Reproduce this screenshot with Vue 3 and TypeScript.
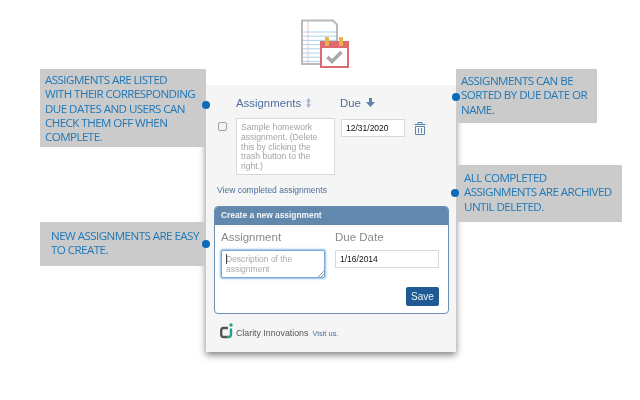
<script setup lang="ts">
const lines: number[] = [0, 1, 2, 3, 4, 5, 6, 7]
</script>

<template>
  <div class="page">
    <div class="col left">
      <div class="note n1">
        <p>ASSIGMENTS ARE LISTED<br />WITH THEIR CORRESPONDING<br />DUE DATES AND USERS CAN<br />CHECK THEM OFF WHEN<br />COMPLETE.</p>
        <i class="dot"></i>
      </div>
      <div class="note n2">
        <p>NEW ASSIGNMENTS ARE EASY<br />TO CREATE.</p>
        <i class="dot"></i>
      </div>
    </div>

    <div class="center">
      <svg class="hero" width="50" height="50" viewBox="0 0 50 50">
        <path d="M2 1.500H33L37 5.500V45H2Z" fill="#fff" stroke="#b9b9b9" stroke-width="2" />
        <line v-for="n in lines" :key="n" x1="3" x2="36" :y1="13 + n * 4.200" :y2="13 + n * 4.200" stroke="#a9d3ea" />
        <line x1="8" x2="8" y1="2" y2="44" stroke="#f0c4c4" />
        <rect x="21" y="23" width="27" height="25" fill="#fff" stroke="#dc6a6e" stroke-width="2" />
        <rect x="21" y="23" width="27" height="6" fill="#dc6a6e" />
        <rect x="25" y="18" width="4" height="9" rx="1" fill="#e9b24a" />
        <rect x="39" y="18" width="4" height="9" rx="1" fill="#e9b24a" />
        <path d="M27.500 38L32 42.500L41.500 33" fill="none" stroke="#a8a8a8" stroke-width="3.500" />
      </svg>

      <main class="panel">
        <div class="heads">
          <span class="h-a">Assignments
            <svg class="sort" width="5" height="10" viewBox="0 0 5 10"><path d="M2.500 0L5 3.500H3.500V6.500H5L2.500 10L0 6.500H1.500V3.500H0Z" fill="#a5bad0" /></svg>
          </span>
          <span class="h-d">Due
            <svg width="9" height="9" viewBox="0 0 9 9"><path d="M3 0H6V4H9L4.500 9L0 4H3Z" fill="#5d84ac" /></svg>
          </span>
        </div>

        <div class="row">
          <span class="check"></span>
          <div class="sample">Sample homework assignment. (Delete this by clicking the trash button to the right.)</div>
          <div class="date d1">12/31/2020</div>
          <svg class="trash" width="12" height="13" viewBox="0 0 12 13">
            <path d="M0.500 2.500H11.500M4 2.500V0.500H8V2.500M1.500 4.500V12.500H10.500V4.500ZM4.500 6V11M7.500 6V11" fill="none" stroke="#5d84ac" />
          </svg>
        </div>

        <a class="view">View completed assignments</a>

        <section class="create">
          <header>Create a new assignment</header>
          <div class="form">
            <div class="fields">
              <div class="field f1">
                <label>Assignment</label>
                <div class="area"><span class="caret"></span>Description of the assignment<svg class="grip" width="7" height="7" viewBox="0 0 7 7"><path d="M1 7L7 1M4 7L7 4" stroke="#999" fill="none" /></svg></div>
              </div>
              <div class="field f2">
                <label>Due Date</label>
                <div class="date d2">1/16/2014</div>
              </div>
            </div>
            <div class="actions"><button type="button">Save</button></div>
          </div>
        </section>

        <footer>
          <svg width="14" height="16" viewBox="0 0 14 16">
            <path d="M8 5H3.500Q1.200 5 1.200 7.500V11.500Q1.200 14 3.500 14H7" fill="none" stroke="#555" stroke-width="2.400" />
            <path d="M11 5.500V11.500Q11 14 8.500 14H7" fill="none" stroke="#2c9c8c" stroke-width="2.400" />
            <circle cx="11" cy="2" r="1.700" fill="#2c9c8c" />
          </svg>
          <span class="brand">Clarity Innovations</span>
          <span class="visit"><a>Visit us</a>.</span>
        </footer>
      </main>
    </div>

    <div class="col right">
      <div class="note n3">
        <i class="dot"></i>
        <p>ASSIGNMENTS CAN BE<br />SORTED BY DUE DATE OR<br />NAME.</p>
      </div>
      <div class="note n4">
        <i class="dot"></i>
        <p>ALL COMPLETED<br />ASSIGNMENTS ARE ARCHIVED<br />UNTIL DELETED.</p>
      </div>
    </div>
  </div>
</template>

<style>
html, body { margin: 0; background: #fff; overflow: hidden; }
</style>

<style scoped>
.page {
  width: 640px;
  height: 400px;
  display: grid;
  grid-template-columns: 206px 250px 184px;
  background: #fff;
  overflow: hidden;
}
.col { display: flex; flex-direction: column; padding-top: 69px; position: relative; z-index: 2; }
.left { padding-left: 40px; gap: 75px; }
.right { gap: 42px; }

.note {
  position: relative;
  background: #cbcbcb;
  color: #1f78b8;
  font: 11.6px/14.300px "Open Sans", sans-serif;
  letter-spacing: -0.56px;
  box-sizing: border-box;
}
.note p { margin: 0; filter: blur(0.25px); }
.n1 { height: 78px; padding: 4px 0 0 5px; }
.n2 { height: 44px; padding: 7px 0 0 11px; }
.n3 { width: 141px; height: 54px; padding: 5px 0 0 5px; }
.n4 { width: 166px; height: 57px; padding: 6px 0 0 8px; }
.dot {
  position: absolute;
  width: 8px;
  height: 8px;
  border-radius: 50%;
  background: #0a6cba;
}
.n1 .dot { right: -4px; top: 32px; }
.n2 .dot { right: -4px; top: 18px; }
.n3 .dot { left: -4px; top: 24px; }
.n4 .dot { left: -5px; top: 24px; }

.center { display: flex; flex-direction: column; z-index: 1; }
.hero { margin: 19px 0 0 94px; height: 50px; flex: none; }
.panel {
  margin-top: 16px;
  width: 250px;
  height: 267px;
  box-sizing: border-box;
  background: #f5f5f5;
  padding-top: 11px;
  font-family: "Liberation Sans", sans-serif;
  box-shadow: 0 3px 7px rgba(0, 0, 0, 0.5);
  clip-path: inset(0 -10px -12px -10px);
  filter: blur(0.25px);
}
.heads {
  display: flex;
  padding-left: 30px;
  height: 14px;
  font-size: 11.400px;
  line-height: 14px;
  color: #4d6f9c;
}
.h-a { width: 104px; }
.sort { margin-left: 2px; vertical-align: -1px; }
.h-d svg { margin-left: 2px; }
.row { display: flex; align-items: flex-start; margin-top: 8px; position: relative; height: 57px; }
.check {
  width: 7px;
  height: 7px;
  margin: 4px 0 0 12px;
  background: #f4f4f4;
  border: 1px solid #a0a0a0;
  border-radius: 2px;
}
.sample {
  width: 99px;
  height: 57px;
  box-sizing: border-box;
  margin-left: 9px;
  padding: 4px 4px;
  background: #fff;
  border: 1px solid #d9d9d9;
  font-size: 8.600px;
  line-height: 9.750px;
  color: #a4a4a4;
}
.date {
  box-sizing: border-box;
  background: #fff;
  border: 1px solid #d9d9d9;
  color: #111;
  font-size: 8.500px;
  height: 18px;
  line-height: 16px;
  padding-left: 4px;
}
.d1 { width: 64px; margin: 1px 0 0 6px; }
.trash { margin: 4px 0 0 9px; }
.view {
  display: block;
  margin: 10px 0 0 11px;
  font-size: 8.500px;
  line-height: 10px;
  color: #4d6f9c;
}
.create {
  box-sizing: border-box;
  width: 235px;
  height: 108px;
  margin: 11px 0 0 8px;
  background: #fff;
  border: 1px solid #6c90b5;
  border-radius: 4px;
  overflow: hidden;
}
.create header {
  height: 18px;
  line-height: 17px;
  background: #6388ae;
  color: #f2f5f8;
  font-size: 8.400px;
  font-weight: 700;
  padding-left: 6px;
}
.form { padding: 5px 9px 0 6px; }
.fields { display: flex; }
.field label {
  display: block;
  font-size: 11.500px;
  line-height: 14px;
  color: #8a8a8a;
  margin-bottom: 6px;
}
.f1 { width: 114px; }
.f2 { width: 104px; }
.area {
  position: relative;
  box-sizing: border-box;
  width: 104px;
  height: 28px;
  padding: 3px 3px 0 4px;
  border: 1px solid #78a9d8;
  box-shadow: 0 0 2px 1px rgba(100, 165, 225, 0.7);
  background: #fff;
  font-size: 8.500px;
  line-height: 10px;
  color: #aaa;
  border-radius: 2px;
}
.caret {
  position: absolute;
  left: 4px;
  top: 3px;
  width: 1px;
  height: 10px;
  background: #444;
}
.grip { position: absolute; right: 0; bottom: 0; }
.d2 { width: 104px; }
.actions { display: flex; justify-content: flex-end; margin-top: 9px; }
button {
  width: 33px;
  height: 19px;
  padding: 0;
  border: none;
  border-radius: 2px;
  background: #1f5a94;
  color: #eef3f8;
  font: 10px "Liberation Sans", sans-serif;
}
footer {
  display: flex;
  align-items: flex-end;
  margin: 9px 0 0 14px;
  font-size: 7.500px;
  line-height: 11px;
}
.brand { margin-left: 2px; color: #555; font-size: 8.800px; }
.visit { margin-left: 4px; color: #4d6f9c; }
</style>
